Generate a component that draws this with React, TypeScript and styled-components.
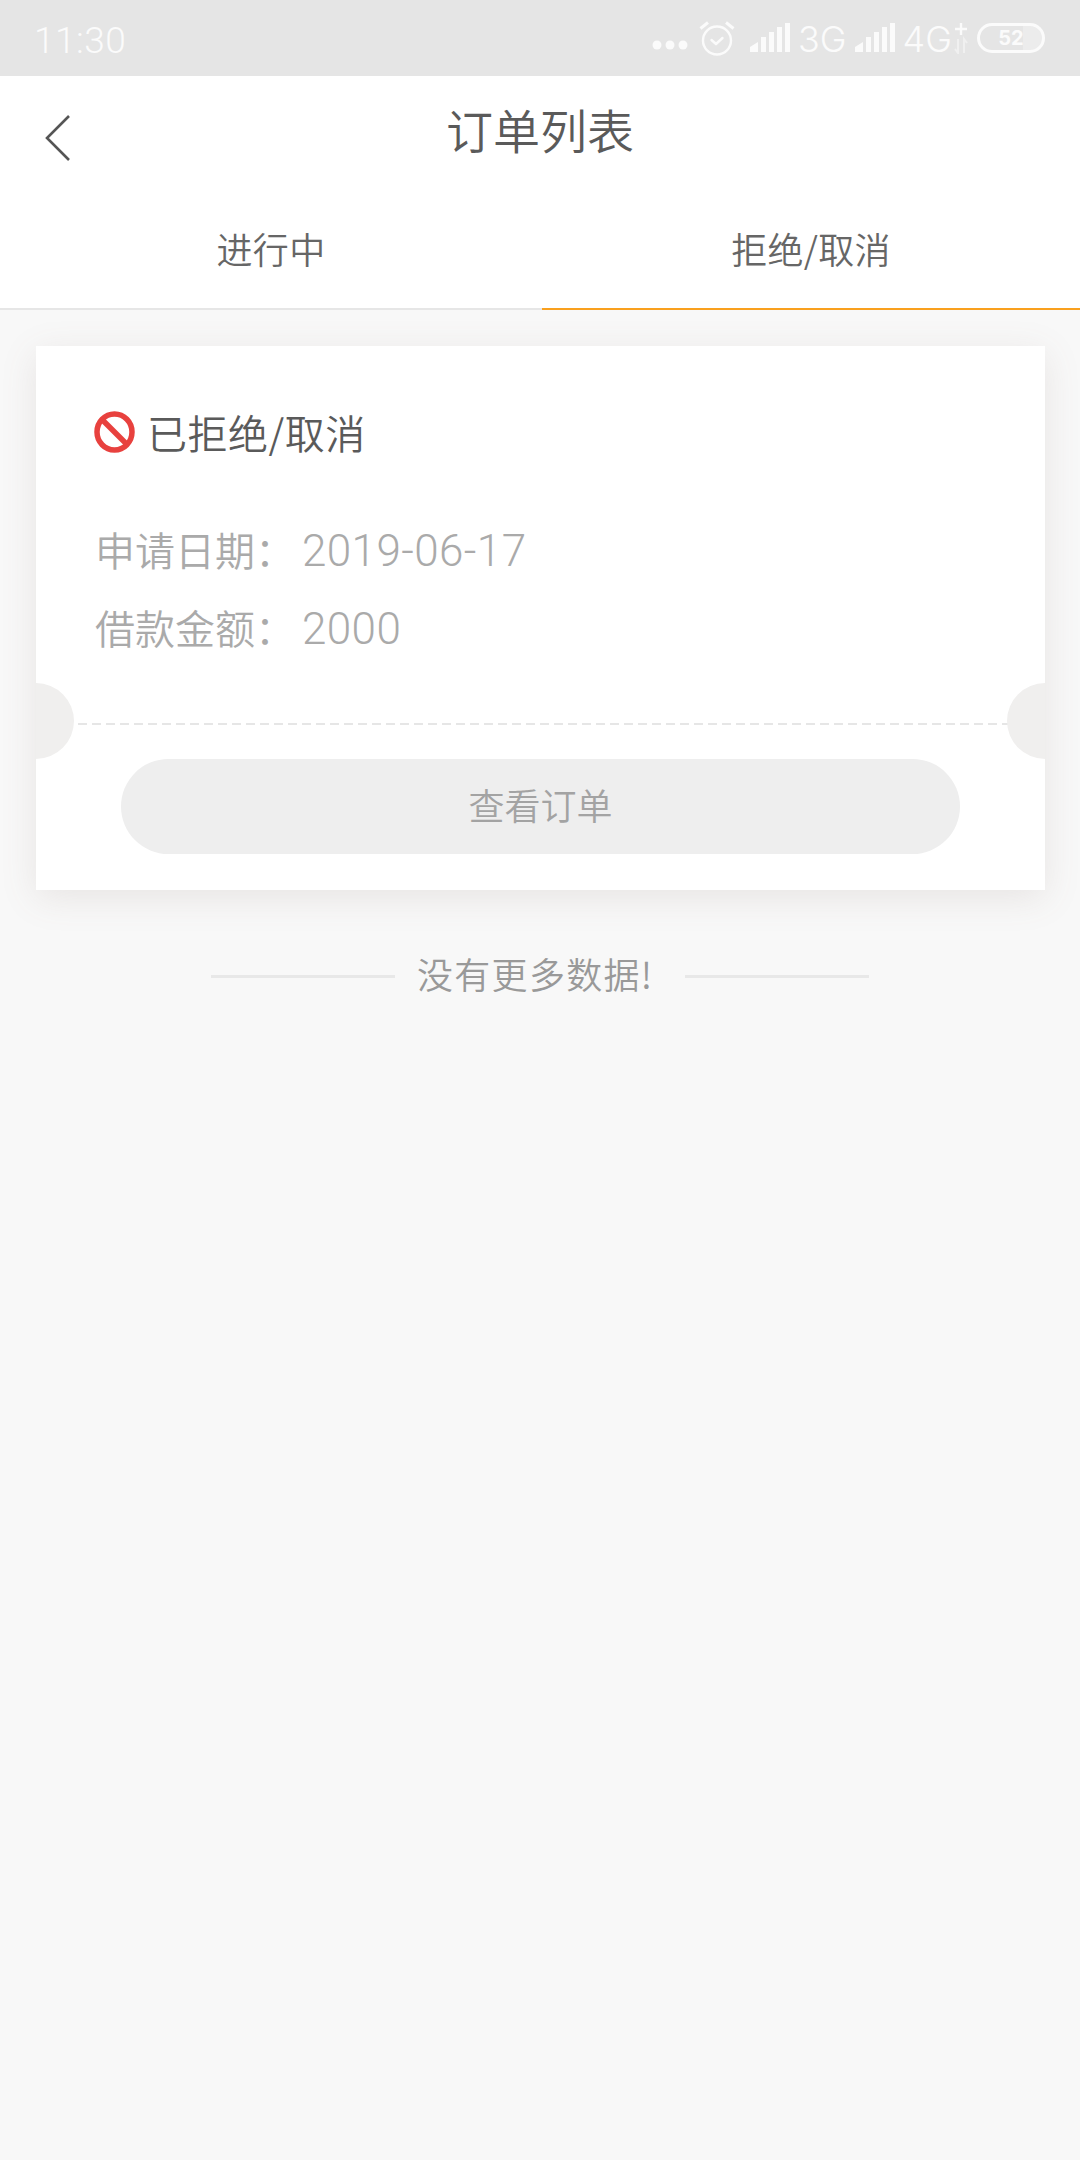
import styled, { createGlobalStyle } from "styled-components";

const GlobalStyle = createGlobalStyle`
	html, body {
		margin: 0;
		padding: 0;
		background: #f8f8f8;
	}
	* {
		box-sizing: border-box;
	}
`;

const cjk = `"Noto Sans CJK SC", sans-serif`;
const latin = `Roboto, "Noto Sans CJK SC", sans-serif`;

const Page = styled.div`
	width: 1080px;
	height: 2160px;
	background: #f8f8f8;
	font-family: ${latin};
	overflow: hidden;
`;

const StatusBar = styled.div`
	height: 76px;
	background: #e5e5e5;
	display: flex;
	align-items: center;
	padding: 0 35px 0 34px;
	color: #fbfbfb;
`;

const Clock = styled.span`
	font-size: 37px;
	font-weight: 300;
	letter-spacing: 0.5px;
	flex: 1;
	margin-top: 4px;
`;

const StatusIcons = styled.div`
	display: flex;
	align-items: center;
	height: 40px;
`;

const NetworkLabel = styled.span`
	font-family: Inter, sans-serif;
	font-size: 36px;
	font-weight: 300;
	line-height: 40px;
	margin: 2px 8px 0 8px;
`;

const Battery = styled.div`
	width: 68px;
	height: 30px;
	margin-left: 9px;
	border: 3px solid #fbfbfb;
	border-radius: 15px;
	display: flex;
	align-items: center;
	justify-content: center;
	font-family: Inter, sans-serif;
	font-size: 20px;
	font-weight: 700;
	background: linear-gradient(to right, #e5e5e5 0 70%, #ececec 70% 100%);
`;

const Header = styled.header`
	background: #fff;
	height: 112px;
	display: flex;
	align-items: center;
	justify-content: center;
	position: relative;
`;

const BackIcon = styled.svg`
	position: absolute;
	left: 44px;
	top: 38px;
`;

const Title = styled.h1`
	margin: 0 0 8px;
	font-family: ${cjk};
	font-size: 47px;
	font-weight: 350;
	color: #5a5a5a;
`;

const Tabs = styled.nav`
	display: grid;
	grid-template-columns: 542px 1fr;
	height: 122px;
	background: #fff;
`;

const Tab = styled.div<{ $active?: boolean }>`
	display: flex;
	align-items: center;
	justify-content: center;
	font-family: ${cjk};
	font-size: 36px;
	font-weight: 350;
	letter-spacing: 0.3px;
	color: #666;
	border-bottom: 2px solid ${p => (p.$active ? "#f9a01e" : "#e6e6e6")};
`;

const Card = styled.section`
	position: relative;
	margin: 36px 35px 0 36px;
	height: 544px;
	background: #fff;
	overflow: hidden;
	box-shadow: 0 8px 34px rgba(120, 100, 90, 0.13);
	display: flex;
	flex-direction: column;
`;

const CardBody = styled.div`
	height: 377px;
	padding: 63px 0 0 58px;
`;

const StatusRow = styled.div`
	display: flex;
	align-items: center;
	gap: 12px;
	height: 46px;
	margin-bottom: 55px;
	font-family: ${cjk};
	font-size: 40px;
	font-weight: 350;
	letter-spacing: 0.5px;
	color: #5a5a5a;
`;

const InfoRow = styled.div`
	display: flex;
	align-items: baseline;
	height: 78px;
	line-height: 78px;
	padding-left: 1px;
	font-size: 44px;
	font-weight: 300;
	letter-spacing: 0.4px;
	color: #aaa;
`;

const InfoLabel = styled.span`
	font-family: ${cjk};
	font-size: 40px;
	font-weight: 350;
	letter-spacing: 0;
	width: 207px;
`;

const Divider = styled.div`
	height: 2px;
	flex: none;
	background: repeating-linear-gradient(to right, #e6e6e6 0 9px, transparent 9px 14px);
`;

const Notch = styled.div<{ $side: "left" | "right" }>`
	position: absolute;
	top: 337px;
	${p => p.$side}: -38px;
	width: 76px;
	height: 76px;
	border-radius: 50%;
	background: #f0efee;
`;

const ViewButton = styled.button`
	display: block;
	flex: none;
	width: 839px;
	height: 95px;
	margin: 34px 0 0 85px;
	padding: 0 0 6px;
	border: 0;
	border-radius: 48px;
	background: #eeeeee;
	font-family: ${cjk};
	font-size: 36px;
	font-weight: 350;
	color: #a3a3a3;
`;

const NoMore = styled.div`
	display: flex;
	align-items: center;
	justify-content: center;
	margin-top: 60px;
	height: 52px;
	font-family: ${cjk};
	font-size: 36px;
	font-weight: 350;
	color: #999;
	gap: 22px;
`;

const NoMoreLine = styled.span`
	width: 184px;
	height: 3px;
	background: #e8e8e8;
`;

const NoMoreText = styled.span`
	width: 246px;
	margin-bottom: 6px;
	letter-spacing: 1.3px;
`;

function SignalIcon() {
	return (
		<svg width="40" height="30" viewBox="0 0 40 30">
			<path d="M0 29V24L8 19V29Z" fill="#fbfbfb" />
			<rect x="11" y="14" width="5" height="15" fill="#fbfbfb" />
			<rect x="19" y="9" width="5" height="20" fill="#fbfbfb" />
			<rect x="27" y="4" width="5" height="25" fill="#fbfbfb" />
			<rect x="35" y="0" width="5" height="29" fill="#fbfbfb" />
		</svg>
	);
}

export default function App() {
	return (
		<Page>
			<GlobalStyle />
			<StatusBar>
				<Clock>11:30</Clock>
				<StatusIcons>
					<svg width="36" height="12" viewBox="0 0 36 12" style={{ marginTop: 13, marginRight: 11 }}>
						<circle cx="5" cy="6" r="4.5" fill="#fbfbfb" />
						<circle cx="18" cy="6" r="4.5" fill="#fbfbfb" />
						<circle cx="31" cy="6" r="4.5" fill="#fbfbfb" />
					</svg>
					<svg width="36" height="36" viewBox="0 0 36 36" fill="none" stroke="#fbfbfb" strokeWidth="2.4" style={{ marginRight: 15 }}>
						<circle cx="18" cy="20.5" r="14" />
						<path d="M12.5 20l4.5 4 6.5-6" strokeLinecap="round" strokeLinejoin="round" />
						<path d="M1.5 8.5L9 2.5M34.5 8.5L27 2.5" strokeWidth="3" />
					</svg>
					<SignalIcon />
					<NetworkLabel>3G</NetworkLabel>
					<SignalIcon />
					<NetworkLabel>4G</NetworkLabel>
					<svg width="14" height="32" viewBox="0 0 14 32" style={{ marginLeft: -6 }}>
						<path d="M7 1V13M1 7H13" stroke="#fbfbfb" strokeWidth="2.4" />
						<path d="M4 17V31L1 27M10 31V17L13 21" stroke="#f0f0f0" strokeWidth="2" fill="none" />
					</svg>
					<Battery>52</Battery>
				</StatusIcons>
			</StatusBar>
			<Header>
				<BackIcon width="28" height="50" viewBox="0 0 28 50" fill="none" stroke="#555" strokeWidth="2.6">
					<path d="M25 2L3 24L25 46" />
				</BackIcon>
				<Title>订单列表</Title>
			</Header>
			<Tabs>
				<Tab>进行中</Tab>
				<Tab $active>拒绝/取消</Tab>
			</Tabs>
			<Card>
				<CardBody>
					<StatusRow>
						<svg width="41" height="42" viewBox="0 0 41 42" fill="none" stroke="#e8413e" strokeWidth="5.5">
							<ellipse cx="20.5" cy="21" rx="17.5" ry="18" />
							<path d="M8.5 9L32.5 33" />
						</svg>
						已拒绝/取消
					</StatusRow>
					<InfoRow>
						<InfoLabel>申请日期：</InfoLabel>
						2019-06-17
					</InfoRow>
					<InfoRow>
						<InfoLabel>借款金额：</InfoLabel>
						2000
					</InfoRow>
				</CardBody>
				<Divider />
				<Notch $side="left" />
				<Notch $side="right" />
				<ViewButton>查看订单</ViewButton>
			</Card>
			<NoMore>
				<NoMoreLine />
				<NoMoreText>没有更多数据!</NoMoreText>
				<NoMoreLine />
			</NoMore>
		</Page>
	);
}
